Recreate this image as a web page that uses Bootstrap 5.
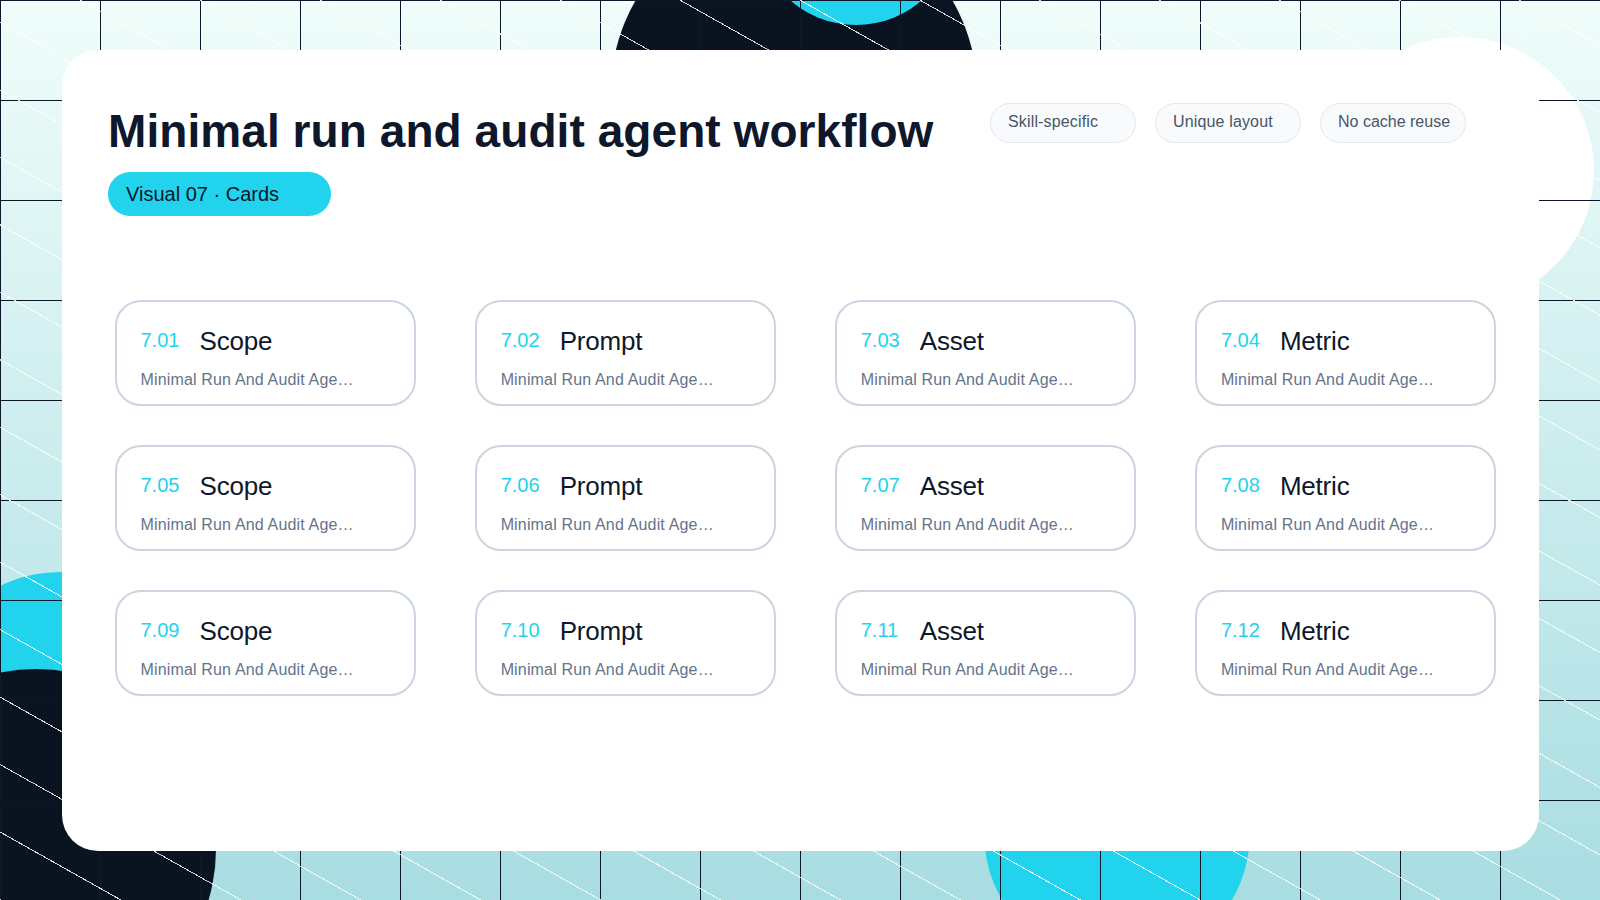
<!DOCTYPE html>
<html lang="en">
<head>
    <meta charset="UTF-8">
    <meta name="viewport" content="width=device-width, initial-scale=1.0">
    <title>Minimal run and audit agent workflow</title>
    <link href="https://cdn.jsdelivr.net/npm/bootstrap@5.3.3/dist/css/bootstrap.min.css" rel="stylesheet">
    <style>
        body {
            width: 1600px; height: 900px; overflow: hidden; position: relative;
            font-family: "Liberation Sans", Arial, sans-serif;
            background: linear-gradient(180deg, #f0fdfa 0%, #a8dde2 100%);
        }
        /* decoration under the panel */
        .backdrop { position: absolute; inset: 0; overflow: hidden; }
        .blob { position: absolute; border-radius: 50%; }
        .blob-dark { width: 360px; height: 360px; background: #0a1320; }
        .blob-cyan { width: 270px; height: 270px; background: #22d3ee; }
        .blob-top-dark { left: 611px; top: -91px; width: 366px; height: 366px; }
        .blob-top-cyan { left: 756px; top: -175px; width: 200px; height: 200px; }
        .blob-left-cyan { left: -75px; top: 572px; }
        .blob-left-dark { left: -144px; top: 669px; }
        .blob-right-cyan { left: 984px; top: 700px; width: 266px; height: 266px; }
        .blob-white { left: 1326px; top: 37px; width: 268px; height: 268px; background: #fff; }
        .overlay {
            position: absolute; inset: 0;
            background-image:
                repeating-linear-gradient(29.36deg, rgba(255,255,255,.85) 0, rgba(255,255,255,.85) 1px, transparent 1px, transparent 58.8px),
                linear-gradient(90deg, #0d172a 1px, transparent 1px),
                linear-gradient(180deg, #0d172a 1px, transparent 1px);
            background-size: auto, 100px 100px, 100px 100px;
        }
        .stage { position: relative; padding: 50px 61px 49px 62px; height: 900px; }
        .panel { height: 801px; background: #fff; border-radius: 36px; padding: 53px 43px 0 46px; }
        .main-title { font-size: 46px; font-weight: 700; line-height: 53px; color: #0f172a; margin: 2px 0 0; letter-spacing: .07px; }
        .kind-pill {
            width: 223px; height: 44px; margin-top: 14px; padding: 0 18px;
            border-radius: 22px; background: #22d3ee; color: #0f172a;
            font-size: 20px; line-height: 44px; white-space: pre;
        }
        .tag-chip {
            width: 146px; height: 40px; padding: 0 17px; border: 1px solid #e2e8f0; border-radius: 20px;
            background: #f8fafc; color: #475569; font-size: 16px; line-height: 35px; white-space: nowrap;
        }
        .chip-loose { letter-spacing: .15px; }
        .tag-list { gap: 19px; margin: 0 30px 0 0; }
        .step-grid { --bs-gutter-x: 59px; --bs-gutter-y: 39px; margin-top: 45px; margin-left: -23px; margin-right: -29.5px; }
        .step-card { height: 106px; padding: 24px 24px 0; border: 2px solid #cbd5e1; border-radius: 26px; background: #fff; }
        .step-num { font-size: 20px; line-height: 28px; margin-bottom: 2px; color: #22d3ee; width: 59px; flex: none; }
        .step-name { font-size: 26px; line-height: 30px; color: #0f172a; letter-spacing: -.2px; }
        .step-desc { font-size: 16px; line-height: 20px; color: #64748b; margin-top: 14px; white-space: nowrap; letter-spacing: .16px; }
    </style>
</head>
<body>
<div class="backdrop">
    <div class="blob blob-white"></div>
    <div class="blob blob-dark blob-top-dark"></div>
    <div class="blob blob-cyan blob-top-cyan"></div>
    <div class="blob blob-cyan blob-left-cyan"></div>
    <div class="blob blob-dark blob-left-dark"></div>
    <div class="blob blob-cyan blob-right-cyan"></div>
    <div class="overlay"></div>
</div>

<div class="stage">
    <div class="panel">
        <div class="d-flex justify-content-between align-items-start">
            <div>
                <h1 class="main-title">Minimal run and audit agent workflow</h1>
                <div class="kind-pill">Visual 07 · Cards</div>
            </div>
            <div class="d-flex tag-list">
                <div class="tag-chip chip-loose">Skill-specific</div>
                <div class="tag-chip chip-loose">Unique layout</div>
                <div class="tag-chip">No cache reuse</div>
            </div>
        </div>
        <div class="row row-cols-4 step-grid" id="steps"></div>
    </div>
</div>
<script src="https://cdn.jsdelivr.net/npm/bootstrap@5.3.3/dist/js/bootstrap.bundle.min.js"></script>
<script>
    const names = ['Scope', 'Prompt', 'Asset', 'Metric'];
    const steps = [];
    for (let i = 1; i <= 12; i++) {
        steps.push(`
            <div class="col">
                <div class="step-card">
                    <div class="d-flex align-items-center">
                        <div class="step-num">7.${String(i).padStart(2, '0')}</div>
                        <div class="step-name">${names[(i - 1) % 4]}</div>
                    </div>
                    <div class="step-desc">Minimal Run And Audit Age…</div>
                </div>
            </div>`);
    }
    document.getElementById('steps').innerHTML = steps.join('');
</script>
</body>
</html>
